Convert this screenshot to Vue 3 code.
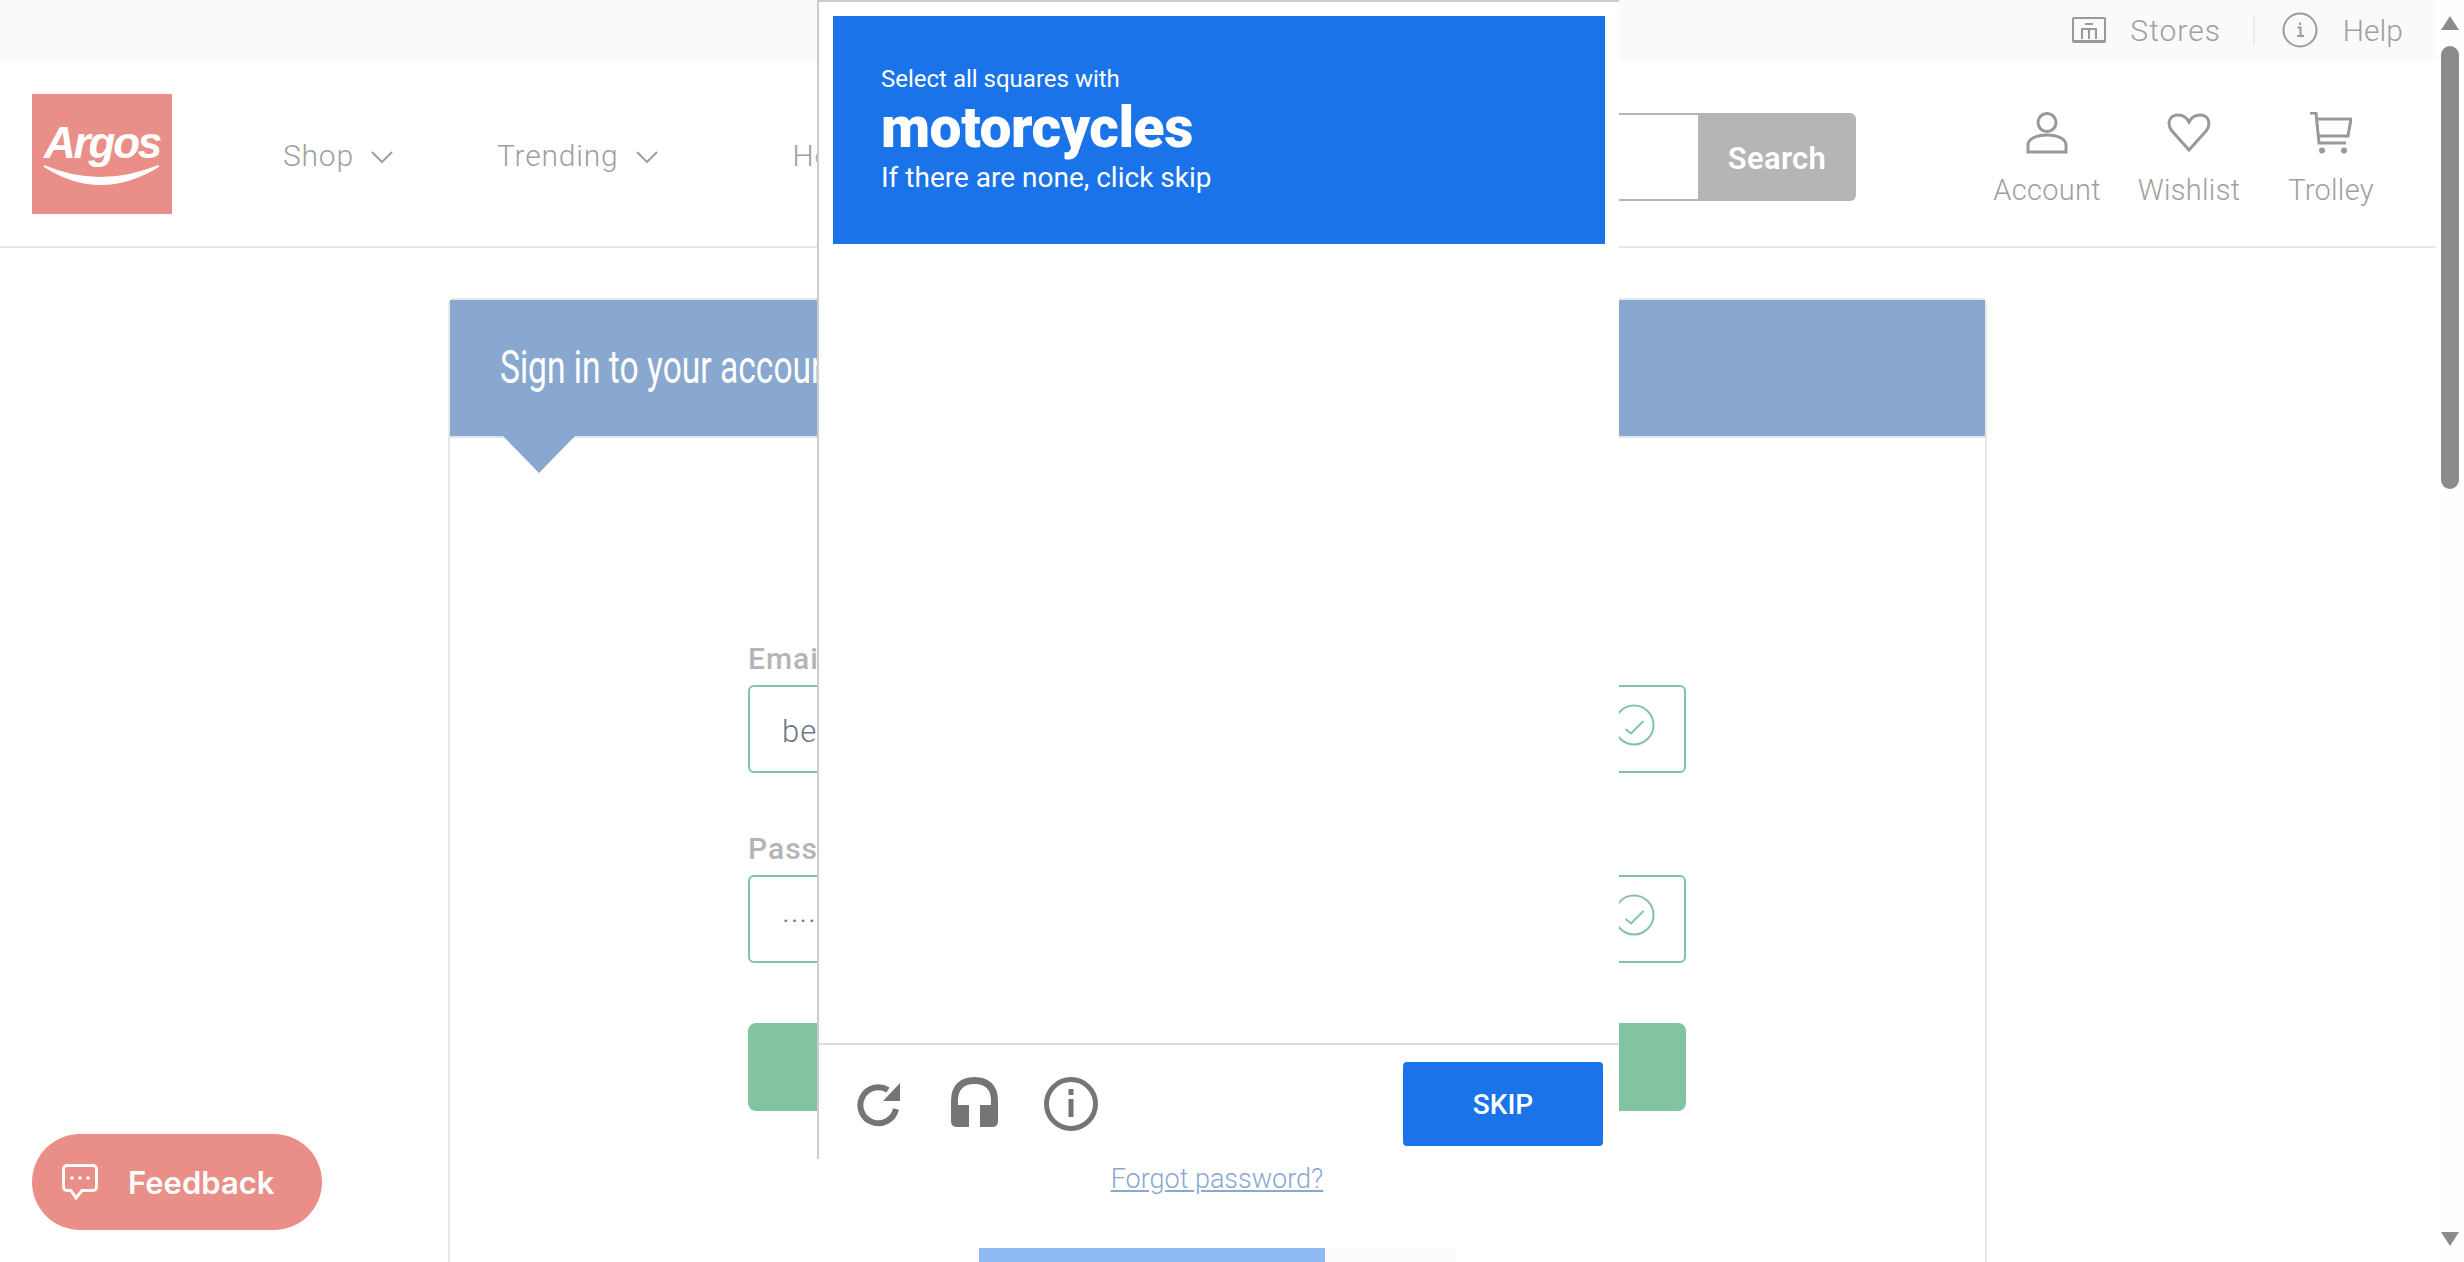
<script setup>
const navItems = [
  { label: 'Shop', chevron: true },
  { label: 'Trending', chevron: true },
  { label: 'Home', chevron: false, far: true },
]

const fields = [
  { label: 'Email address', value: 'ben@example.com' },
  { label: 'Password', value: '·····················' },
]
</script>

<template>
  <div class="shell">
    <div class="page">
      <div class="topbar">
        <svg class="stores-icon" width="34" height="26" viewBox="0 0 34 26" fill="none">
          <rect x="1" y="1" width="32" height="24" rx="1" />
          <path d="M13 7h8M10 22V12h14v10M17 12v10M1 24h32" />
        </svg>
        <span class="top-link stores">Stores</span>
        <span class="top-divider"></span>
        <svg class="help-icon" width="36" height="36" viewBox="0 0 36 36" fill="none">
          <circle cx="18" cy="18" r="16.5" />
          <path d="M15.5 15.5H18.5V24M15 24H22M18 10.5v2.5" />
        </svg>
        <span class="top-link">Help</span>
      </div>

      <header class="header">
        <svg class="logo" width="140" height="120" viewBox="0 0 140 120">
          <rect width="140" height="120" fill="#ea8f88" />
          <text x="12" y="64" class="logo-text">Argos</text>
          <path d="M12 71Q68 95 126 71L127 73Q68 109 12 73Z" fill="#fff" />
        </svg>

        <nav class="nav">
          <a v-for="item in navItems" :key="item.label" class="nav-item" :class="{ far: item.far }">
            {{ item.label }}
            <svg v-if="item.chevron" width="22" height="13" viewBox="0 0 22 13" fill="none">
              <path d="M1 1l10 10L21 1" />
            </svg>
          </a>
        </nav>

        <div class="search">
          <div class="search-input"></div>
          <div class="search-btn">Search</div>
        </div>

        <div class="actions">
          <div class="action">
            <svg width="42" height="42" viewBox="0 0 42 42" fill="none">
              <circle cx="21" cy="10.5" r="9" />
              <path d="M2 40V33C2 27 10 23 21 23S40 27 40 33V40Z" />
            </svg>
            <span>Account</span>
          </div>
          <div class="action">
            <svg width="44" height="42" viewBox="0 0 44 42" fill="none">
              <path d="M22 38L5 19C-1 11 3 3 11 3C16 3 20 6 22 10C24 6 28 3 33 3C41 3 45 11 39 19Z" />
            </svg>
            <span>Wishlist</span>
          </div>
          <div class="action">
            <svg width="42" height="42" viewBox="0 0 42 42" fill="none">
              <path d="M0 1H6L9 31H36M7 7H41L38 24H8" />
              <circle class="wheel" cx="12" cy="38.5" r="3" />
              <circle class="wheel" cx="34" cy="38.5" r="3" />
            </svg>
            <span>Trolley</span>
          </div>
        </div>
      </header>

      <main class="main">
        <section class="card">
          <div class="card-head">
            <h1>Sign in to your account</h1>
          </div>
          <form class="form" @submit.prevent>
            <div v-for="field in fields" :key="field.label" class="field">
              <label>{{ field.label }}</label>
              <div class="input">
                <span>{{ field.value }}</span>
                <svg width="42" height="42" viewBox="0 0 42 42" fill="none">
                  <circle cx="21" cy="21" r="19.5" />
                  <path d="M12.5 25L18 29.5L30.5 17" />
                </svg>
              </div>
            </div>
            <button class="submit" type="submit">Sign in</button>
            <a class="forgot">Forgot password?</a>
            <div class="register">
              <div class="register-main"></div>
              <div class="register-side"></div>
            </div>
          </form>
        </section>
      </main>

      <div class="challenge">
        <div class="prompt">
          <div class="prompt-small">Select all squares with</div>
          <div class="prompt-big">motorcycles</div>
          <div class="prompt-sub">If there are none, click skip</div>
        </div>
        <div class="tiles"></div>
        <div class="challenge-foot">
          <svg width="44" height="46" viewBox="0 0 44 46" fill="none" class="foot-icon refresh">
            <path d="M31 9A18 18 0 1 0 39 28" stroke="#757575" stroke-width="6" />
            <path d="M43 2V20H26Z" fill="#757575" />
          </svg>
          <svg width="47" height="51" viewBox="0 0 47 51" fill="none" class="foot-icon phones">
            <path d="M3.5 32V24C3.5 10 11 3.5 23.5 3.5S43.5 10 43.5 24V32" stroke="#757575" stroke-width="7" />
            <path d="M0 28H18V50H6Q0 50 0 44ZM47 28H29V50H41Q47 50 47 44Z" fill="#757575" />
          </svg>
          <svg width="54" height="54" viewBox="0 0 54 54" fill="none" class="foot-icon">
            <circle cx="27" cy="27" r="24.5" stroke="#757575" stroke-width="5" />
            <path d="M24.5 12H29.5V18H24.5ZM24.5 22H29.5V40H24.5Z" fill="#757575" />
          </svg>
          <button class="skip" type="button">SKIP</button>
        </div>
      </div>

      <button class="feedback" type="button">
        <svg width="36" height="36" viewBox="0 0 36 36" fill="none">
          <path d="M5 1.5H31A3.5 3.5 0 0 1 34.5 5V23A3.5 3.5 0 0 1 31 26.5H20L14 34L9 26.5H5A3.5 3.5 0 0 1 1.5 23V5A3.5 3.5 0 0 1 5 1.5Z" />
          <circle cx="10" cy="14" r="1.8" />
          <circle cx="18" cy="14" r="1.8" />
          <circle cx="26" cy="14" r="1.8" />
        </svg>
        Feedback
      </button>
    </div>

    <div class="scrollbar">
      <span class="arrow up"></span>
      <span class="thumb"></span>
      <span class="arrow down"></span>
    </div>
  </div>
</template>

<style>
html,
body {
  margin: 0;
  height: 100%;
  overflow: hidden;
  background: #fff;
}
</style>

<style scoped>
.shell {
  display: flex;
  height: 1262px;
  overflow: hidden;
  font-family: Roboto, "Liberation Sans", sans-serif;
  background: #fff;
}

.page {
  position: relative;
  width: 2436px;
  flex: none;
  height: 100%;
  overflow: hidden;
}

.topbar {
  display: flex;
  align-items: center;
  justify-content: flex-end;
  height: 60px;
  padding-right: 33px;
  background: #fafafa;
  box-sizing: border-box;
}

.topbar svg {
  stroke: #9a9a9a;
  stroke-width: 2;
}

.stores-icon {
  margin-right: 24px;
}

.top-link {
  font-size: 30px;
  font-weight: 300;
  color: #a0a0a0;
}

.top-link.stores {
  letter-spacing: 1px;
}

.top-divider {
  width: 2px;
  height: 30px;
  margin: 0 27px 0 32px;
  background: #ececec;
}

.help-icon {
  margin-right: 25px;
}

.header {
  display: flex;
  align-items: center;
  height: 188px;
  box-sizing: border-box;
  padding: 0 34px 0 32px;
  border-bottom: 2px solid #e6e6e6;
}

.logo {
  flex: none;
  margin-top: 2px;
}

.logo-text {
  font-family: "Liberation Sans", sans-serif;
  font-size: 44px;
  font-weight: 700;
  font-style: italic;
  letter-spacing: -2.2px;
  fill: #fff;
}

.nav {
  display: flex;
  align-items: center;
  gap: 104px;
  margin: 5px 0 0 111px;
}

.nav-item {
  display: flex;
  align-items: center;
  gap: 17px;
  font-size: 30px;
  font-weight: 300;
  letter-spacing: 0.8px;
  color: #a0a0a0;
}

.nav-item.far {
  margin-left: 31px;
}

.nav-item svg {
  stroke: #a0a0a0;
  stroke-width: 2;
  margin-top: 4px;
}

.search {
  display: flex;
  height: 88px;
  margin: 8px 120px 0 auto;
}

.search-input {
  width: 700px;
  box-sizing: border-box;
  border: 2px solid #b5b5b5;
  border-right: 0;
  background: #fff;
}

.search-btn {
  display: flex;
  align-items: center;
  justify-content: center;
  width: 158px;
  padding-top: 2px;
  box-sizing: border-box;
  border-radius: 0 6px 6px 0;
  background: #b5b5b5;
  color: #fff;
  font-size: 31px;
  font-weight: 600;
  letter-spacing: 0.3px;
}

.actions {
  display: grid;
  grid-template-columns: repeat(3, 142px);
  margin-top: 12px;
}

.action {
  display: flex;
  flex-direction: column;
  align-items: center;
  gap: 19px;
  font-size: 29px;
  font-weight: 300;
  letter-spacing: 0.3px;
  line-height: 34px;
  color: #a0a0a0;
}

.action svg {
  stroke: #999;
  stroke-width: 3;
}

.action .wheel {
  fill: #999;
  stroke: none;
}

.main {
  padding: 50px 0 0 448px;
}

.card {
  width: 1539px;
  box-sizing: border-box;
  border: 2px solid #e8e8e8;
  border-radius: 6px 6px 0 0;
}

.card-head {
  position: relative;
  display: flex;
  align-items: center;
  height: 136px;
  padding-left: 50px;
  background: #88a8cf;
  border-bottom: 2px solid #dfe5ec;
}

.card-head::after {
  content: "";
  position: absolute;
  left: 53px;
  top: 136px;
  width: 72px;
  height: 37px;
  background: #88a8cf;
  clip-path: polygon(0 0, 100% 0, 50% 100%);
}

.card-head h1 {
  margin: 0 0 2px;
  font-size: 46px;
  font-weight: 400;
  color: #fff;
  white-space: nowrap;
  transform: scaleX(0.73);
  transform-origin: left center;
}

.form {
  display: flex;
  flex-direction: column;
  width: 938px;
  margin-left: 298px;
  padding-top: 201px;
}

.field {
  margin-bottom: 56px;
}

.field label {
  display: block;
  margin-bottom: 8px;
  padding-top: 2px;
  font-size: 30px;
  font-weight: 500;
  letter-spacing: 1px;
  line-height: 36px;
  color: #b5b5b5;
}

.input {
  display: flex;
  align-items: center;
  justify-content: space-between;
  height: 88px;
  box-sizing: border-box;
  padding: 0 29px 0 32px;
  border: 2px solid #82c4a2;
  border-radius: 6px;
  font-size: 31px;
  font-weight: 300;
  letter-spacing: 1px;
  color: #6d7886;
}

.input span {
  padding-top: 5px;
}

.input svg {
  stroke: #82c4a2;
  stroke-width: 2;
  margin-top: -8px;
}

.submit {
  height: 88px;
  margin-top: 4px;
  border: 0;
  border-radius: 8px;
  background: #82c4a2;
  color: #fff;
  font-family: inherit;
  font-size: 30px;
}

.forgot {
  margin-top: 52px;
  align-self: center;
  font-size: 27px;
  font-weight: 300;
  line-height: 32px;
  color: #88a8cf;
  text-decoration: underline;
}

.register {
  display: flex;
  justify-content: center;
  margin-top: 53px;
}

.register-main {
  width: 346px;
  height: 40px;
  background: #8fbaf5;
}

.register-side {
  width: 130px;
  height: 40px;
  background: #fcfcfc;
}

.challenge {
  position: absolute;
  left: 817px;
  top: 0;
  display: flex;
  flex-direction: column;
  width: 802px;
  height: 1159px;
  box-sizing: border-box;
  border-top: 2px solid #ccc;
  border-left: 2px solid #ccc;
  background: #fff;
}

.prompt {
  display: flex;
  flex-direction: column;
  height: 228px;
  margin: 14px 14px 0;
  padding: 47px 0 0 48px;
  box-sizing: border-box;
  background: #1a73e8;
  color: #fff;
}

.prompt-small {
  font-size: 24px;
  line-height: 32px;
}

.prompt-big {
  margin-top: 3px;
  font-size: 57px;
  font-weight: 900;
  line-height: 60px;
  letter-spacing: -0.5px;
}

.prompt-sub {
  margin-top: 3px;
  font-size: 28px;
  line-height: 34px;
}

.tiles {
  flex: 1;
}

.challenge-foot {
  display: flex;
  align-items: center;
  height: 110px;
  padding: 4px 16px 0 38px;
  border-top: 2px solid #ddd;
}

.foot-icon {
  flex: none;
}

.foot-icon.refresh {
  margin-right: 50px;
}

.foot-icon.phones {
  margin: -3px 46px 0 0;
}

.skip {
  width: 200px;
  height: 84px;
  margin-left: auto;
  border: 0;
  border-radius: 4px;
  background: #1a73e8;
  color: #fff;
  font-family: inherit;
  font-size: 28px;
  font-weight: 500;
}

.feedback {
  position: absolute;
  left: 32px;
  top: 1134px;
  display: flex;
  align-items: center;
  gap: 30px;
  width: 290px;
  height: 96px;
  padding: 0 0 0 30px;
  border: 0;
  border-radius: 48px;
  background: #e98f88;
  color: #fff;
  font-family: Inter, Roboto, sans-serif;
  font-size: 31px;
  font-weight: 600;
}

.feedback svg {
  stroke: #fff;
  stroke-width: 3;
}

.feedback circle {
  fill: #fff;
  stroke: none;
}

.scrollbar {
  display: flex;
  flex: 1;
  flex-direction: column;
  align-items: center;
  padding: 16px 0;
  box-sizing: border-box;
  background: #fefefe;
}

.thumb {
  width: 18px;
  height: 443px;
  margin-top: 16px;
  border-radius: 9px;
  background: #8b8b8b;
}

.arrow {
  width: 18px;
  height: 14px;
  background: #8b8b8b;
}

.arrow.up {
  clip-path: polygon(50% 0, 100% 100%, 0 100%);
}

.arrow.down {
  margin-top: auto;
  clip-path: polygon(0 0, 100% 0, 50% 100%);
}
</style>
